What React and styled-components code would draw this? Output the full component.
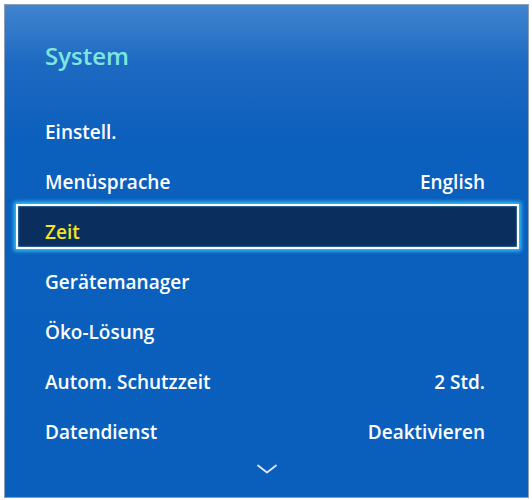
import React from "react";
import styled, { createGlobalStyle } from "styled-components";

const Global = createGlobalStyle`
    html, body {
        margin:0;
        padding:0;
        background:#ffffff;
    }
    body {
        font-family:"Open Sans", "Noto Sans", sans-serif;
    }
`;

const Panel = styled.div`
    box-sizing:border-box;
    margin:4px 0 0 4px;
    width:525px;
    height:494px;
    border:1px solid #8d9db3;
    background:linear-gradient(180deg, #4084cf 0%, #1d69c2 12%, #0b5fbd 28%, #0a5fbc 100%);
    display:flex;
    flex-direction:column;
    overflow:hidden;
`;

const Title = styled.h1`
    margin:0;
    height:99px;
    padding:34px 0 0 40px;
    box-sizing:border-box;
    font-size:24px;
    font-weight:600;
    color:#7de6df;
`;

const List = styled.ul`
    list-style:none;
    margin:0;
    padding:0 9px 0 11px;
    display:flex;
    flex-direction:column;
    gap:5px;
`;

const Row = styled.li`
    box-sizing:border-box;
    height:45px;
    display:flex;
    align-items:center;
    justify-content:space-between;
    padding:10px 32px 0 27px;
    border:2px solid ${props => props.$active ? "#ffffff" : "transparent"};
    background:${props => props.$active ? "#0a2f5f" : "transparent"};
    box-shadow:${props => props.$active ? "0 0 4px 2px #38c8ff, inset 0 0 2px #6fd8ff" : "none"};
    color:${props => props.$active ? "#f4e41c" : "#ffffff"};
    font-size:19px;
    font-weight:600;
`;

const Value = styled.span`
    color:#ffffff;
`;

const More = styled.div`
    flex:1;
    display:flex;
    align-items:center;
    justify-content:center;
    padding-bottom:8px;
`;

const items = [
    {label:"Einstell."},
    {label:"Menüsprache", value:"English"},
    {label:"Zeit", active:true},
    {label:"Gerätemanager"},
    {label:"Öko-Lösung"},
    {label:"Autom. Schutzzeit", value:"2 Std."},
    {label:"Datendienst", value:"Deaktivieren"}
];

const App = () =>
    <>
        <Global/>
        <Panel>
            <Title>System</Title>
            <List>
                {items.map(item =>
                    <Row key={item.label} $active={item.active}>
                        <span>{item.label}</span>
                        {item.value && <Value>{item.value}</Value>}
                    </Row>
                )}
            </List>
            <More>
                <svg width="22" height="10" viewBox="0 0 22 10" fill="none">
                    <path d="M2 1.5 L11 8.5 L20 1.5" stroke="#dce7f5" strokeWidth="1.8" strokeLinecap="round" strokeLinejoin="round"/>
                </svg>
            </More>
        </Panel>
    </>

export default App
